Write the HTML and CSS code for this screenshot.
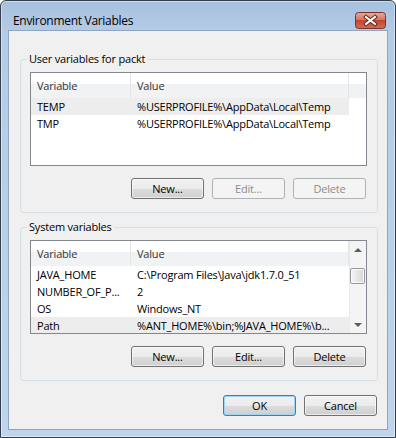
FILE: index.html
```html
<!DOCTYPE html>
<html lang="en">
<head>
  <meta charset="UTF-8">
  <title>Environment Variables</title>
  <link rel="stylesheet" href="styles.css">
</head>
<body>
  <div class="window">
    <div class="titlebar">
      <span class="title">Environment Variables</span>
      <button class="close" aria-label="Close">
        <svg width="31" height="17" viewBox="0 0 31 17">
          <defs>
            <linearGradient id="closeBg" x1="0" y1="0" x2="0" y2="1">
              <stop offset="0" stop-color="#e9ab9d"/>
              <stop offset="0.45" stop-color="#d67563"/>
              <stop offset="0.5" stop-color="#c2452f"/>
              <stop offset="1" stop-color="#d46d59"/>
            </linearGradient>
          </defs>
          <rect x="0.5" y="0.5" width="30" height="16" rx="3" fill="url(#closeBg)" stroke="#7c3128"/>
          <path d="M11 5 L20 12 M20 5 L11 12" stroke="#5b2620" stroke-width="4" stroke-linecap="square"/>
          <path d="M11 5 L20 12 M20 5 L11 12" stroke="#ffffff" stroke-width="2" stroke-linecap="square"/>
        </svg>
      </button>
    </div>

    <div class="client">
      <!-- user variables -->
      <fieldset class="group">
        <legend>User variables for packt</legend>
        <div class="list">
          <div class="list-body">
            <div class="list-header">
              <div class="hcell col-var">Variable</div>
              <div class="hcell col-val">Value</div>
              <div class="hfill"></div>
            </div>
            <div class="row selected">
              <div class="col-var">TEMP</div>
              <div class="col-val">%USERPROFILE%\AppData\Local\Temp</div>
            </div>
            <div class="row">
              <div class="col-var">TMP</div>
              <div class="col-val">%USERPROFILE%\AppData\Local\Temp</div>
            </div>
          </div>
        </div>
        <div class="buttons">
          <button class="btn">New...</button>
          <button class="btn" disabled>Edit...</button>
          <button class="btn" disabled>Delete</button>
        </div>
      </fieldset>

      <!-- system variables -->
      <fieldset class="group group-system">
        <legend>System variables</legend>
        <div class="list">
          <div class="list-body">
            <div class="list-header">
              <div class="hcell col-var">Variable</div>
              <div class="hcell col-val">Value</div>
            </div>
            <div class="row">
              <div class="col-var">JAVA_HOME</div>
              <div class="col-val">C:\Program Files\Java\jdk1.7.0_51</div>
            </div>
            <div class="row">
              <div class="col-var">NUMBER_OF_P...</div>
              <div class="col-val">2</div>
            </div>
            <div class="row">
              <div class="col-var">OS</div>
              <div class="col-val">Windows_NT</div>
            </div>
            <div class="row selected">
              <div class="col-var">Path</div>
              <div class="col-val">%ANT_HOME%\bin;%JAVA_HOME%\b...</div>
            </div>
          </div>
          <div class="scrollbar">
            <div class="arrow"><span class="tri-up"></span></div>
            <div class="track">
              <div class="thumb"></div>
            </div>
            <div class="arrow"><span class="tri-down"></span></div>
          </div>
        </div>
        <div class="buttons">
          <button class="btn">New...</button>
          <button class="btn">Edit...</button>
          <button class="btn">Delete</button>
        </div>
      </fieldset>

      <div class="dialog-buttons">
        <button class="btn btn-default">OK</button>
        <button class="btn">Cancel</button>
      </div>
    </div>
  </div>
</body>
</html>
```

FILE: styles.css
```css
/* general */
* {
  box-sizing: border-box;
}

body {
  margin: 0;
  font-family: "Open Sans", "Noto Sans", sans-serif;
  font-size: 11px;
  letter-spacing: -0.2px;
  color: #000;
  background: #fff;
}

/* window frame */
.window {
  width: 396px;
  height: 438px;
  border: 1px solid #34404e;
  border-radius: 6px 6px 0 0;
  background: linear-gradient(#a6c1de 0, #b4cbe5 30px, #bed5ec 100%);
  box-shadow: inset 0 0 0 1px rgba(255, 255, 255, 0.45);
  padding: 0 7px 7px 7px;
  display: flex;
  flex-direction: column;
}

.titlebar {
  height: 29px;
  padding-top: 10px;
  display: flex;
  align-items: center;
  justify-content: space-between;
  padding-left: 5px;
}

.title {
  font-size: 12px;
  letter-spacing: -0.3px;
  color: #000;
}

.close {
  border: none;
  background: none;
  padding: 0;
  margin-right: 2px;
  width: 31px;
  height: 17px;
  display: block;
}

.close svg {
  display: block;
}

.client {
  flex: 1;
  background: #f0f0f0;
  border: 1px solid #8fa5bf;
  padding: 20px 10px 0 11px;
}

/* group boxes */
.group {
  margin: 0;
  border: 1px solid #d5dfe5;
  border-radius: 3px;
  padding: 5px 10px 13px 9px;
}

.group legend {
  padding: 0 2px;
  margin-left: -3px;
  line-height: 16px;
}

.group-system {
  margin-top: 6px;
}

/* list views */
.list {
  height: 94px;
  border: 1px solid #828790;
  background: #fff;
  display: flex;
  overflow: hidden;
}

.list-body {
  flex: 1;
}

.list-header {
  display: flex;
  height: 25px;
  background: linear-gradient(#ffffff 0, #ffffff 45%, #f1f2f4 45%, #f1f2f4 100%);
}

.hcell {
  line-height: 25px;
  color: #333;
  border-right: 1px solid #e2e5ea;
}

.hfill {
  flex: 1;
}

.col-var {
  width: 100px;
  padding-left: 6px;
  white-space: nowrap;
}

.col-val {
  width: 218px;
  padding-left: 6px;
  white-space: nowrap;
}

.row {
  display: flex;
  height: 17px;
  line-height: 17px;
}

.row.selected {
  background: #ededed;
  margin-right: 17px;
}

.group-system .row.selected {
  margin-right: 0;
}

/* scrollbar */
.scrollbar {
  width: 17px;
  display: flex;
  flex-direction: column;
  background: #f4f4f4;
  border-left: 1px solid #eaeaea;
}

.arrow {
  height: 17px;
  display: flex;
  align-items: center;
  justify-content: center;
}

.tri-up {
  border-left: 4px solid transparent;
  border-right: 4px solid transparent;
  border-bottom: 4px solid #5c5c5c;
}

.tri-down {
  border-left: 4px solid transparent;
  border-right: 4px solid transparent;
  border-top: 4px solid #5c5c5c;
}

.track {
  flex: 1;
  padding-top: 10px;
}

.thumb {
  width: 15px;
  height: 16px;
  border: 1px solid #979797;
  border-radius: 2px;
  background: linear-gradient(90deg, #f5f5f5, #e6e6e6 50%, #d7d7d7);
  box-shadow: inset 0 0 0 1px #fafafa;
}

/* buttons */
.buttons,
.dialog-buttons {
  display: flex;
  justify-content: flex-end;
  gap: 8px;
}

.buttons {
  margin-top: 12px;
  padding-right: 1px;
}

.dialog-buttons {
  margin-top: 14px;
}

.btn {
  width: 73px;
  height: 21px;
  padding: 0;
  font-family: inherit;
  font-size: 11px;
  letter-spacing: -0.2px;
  color: #000;
  border: 1px solid #707070;
  border-radius: 3px;
  background: linear-gradient(#f2f2f2 0, #ebebeb 50%, #dddddd 50%, #cfcfcf 100%);
  box-shadow: inset 0 0 0 1px rgba(255, 255, 255, 0.6);
}

.btn:disabled {
  color: #8d8d8d;
  border-color: #adb2b5;
  background: #f4f4f4;
  box-shadow: none;
}

.btn-default {
  border-color: #3c7fb1;
  box-shadow: inset 0 0 0 1px #9fd5f3;
}
```
